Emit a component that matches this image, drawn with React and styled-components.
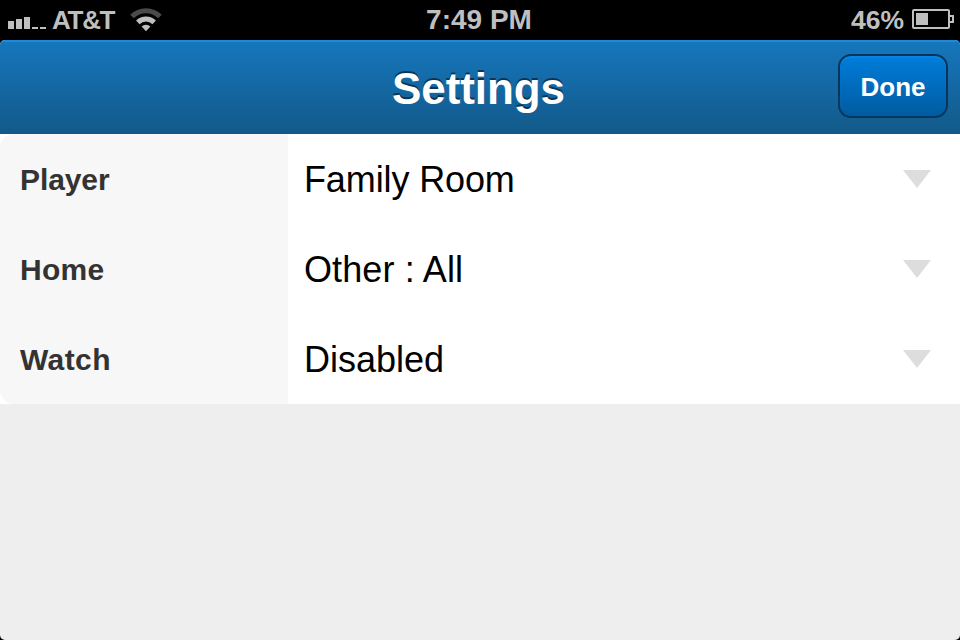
import React from "react";
import styled, { createGlobalStyle } from "styled-components";

const Global = createGlobalStyle`
  * { box-sizing: border-box; }
  body {
    margin: 0;
    background: #000;
    overflow: hidden;
    font-family: "Liberation Sans", Arial, Helvetica, sans-serif;
  }
`;

const Screen = styled.div`
  display: flex;
  flex-direction: column;
  width: 960px;
  height: 640px;
  background: #000;
`;

const StatusBar = styled.div`
  display: grid;
  grid-template-columns: 1fr auto 1fr;
  height: 40px;
  padding: 0 6px 0 8px;
  color: #bfbfbf;
  font-weight: 700;
  line-height: 40px;
  white-space: nowrap;
`;

const StatusGroup = styled.div`
  display: flex;
  height: 40px;
  justify-content: ${(p) => (p.$end ? "flex-end" : "flex-start")};
`;

const Carrier = styled.span`
  width: 64px;
  margin: 0 14px 0 6px;
  font-size: 26px;
  letter-spacing: -1.3px;
`;

const Clock = styled.span`
  margin-right: 4px;
  font-size: 28px;
`;

const Charge = styled.span`
  margin-right: 8px;
  font-size: 26.5px;
`;

const Glyph = styled.svg`
  display: block;
  flex: none;
  height: 40px;
`;

const Page = styled.main`
  flex: 1;
  background: #eee;
  border-radius: 5px;
  overflow: hidden;
`;

const NavBar = styled.header`
  display: grid;
  grid-template-columns: 1fr auto 1fr;
  align-items: start;
  height: 94px;
  padding: 14px 12px 0 9px;
  background: linear-gradient(#1677bd, #125989);
  box-shadow: inset 0 2px #1f8ad8;
`;

const Title = styled.h1`
  grid-column: 2;
  margin: 0;
  padding-top: 10px;
  font-size: 44px;
  line-height: 50px;
  letter-spacing: -0.1px;
  color: #fff;
  text-shadow: 0 -2px 0 rgba(0, 0, 0, 0.5);
`;

const DoneButton = styled.button`
  justify-self: end;
  width: 110px;
  height: 64px;
  padding: 2px 0 0;
  border: 2px solid #07365c;
  border-radius: 13px;
  background: linear-gradient(#007ddb, #005ba0);
  background-clip: padding-box;
  box-shadow: inset 0 2px 1px #0585e4;
  color: #fff;
  font: 700 26px "Liberation Sans", Arial, sans-serif;
`;

const List = styled.div`
  background: #fff;
`;

const Row = styled.div`
  display: flex;
  align-items: center;
  height: 90px;
  padding-right: 29px;
`;

const Name = styled.div`
  width: 288px;
  height: 90px;
  padding-left: 20px;
  background: #f7f7f7;
  color: #333;
  font-size: 30px;
  font-weight: 700;
  line-height: 92px;
  letter-spacing: ${(p) => p.$spacing}px;

  ${Row}:first-child & { border-top-left-radius: 14px; }
  ${Row}:last-child & { border-bottom-left-radius: 14px; }
`;

const Value = styled.div`
  flex: 1;
  padding: 2px 0 0 16px;
  font-size: 36px;
  line-height: 90px;
  letter-spacing: ${(p) => p.$spacing}px;
  color: #000;
`;

const Arrow = styled.span`
  border: 14px solid transparent;
  border-top: 18px solid #ddd;
  border-bottom: 0;
`;

const rows = [
  { name: "Player", value: "Family Room", nameSpacing: -0.1, valueSpacing: -0.12 },
  { name: "Home", value: "Other : All", nameSpacing: 0.25, valueSpacing: 0.1 },
  { name: "Watch", value: "Disabled", nameSpacing: 0.4, valueSpacing: 0 },
];

const Signal = () => (
  <Glyph width="38" viewBox="0 0 38 40" fill="#bfbfbf">
    <path d="M0 21h6v8H0zM8 19h6v10H8zM16 17h6v12h-6zM24 27h6v2h-6zM32 27h6v2h-6z" />
  </Glyph>
);

const Wifi = () => (
  <Glyph width="32" viewBox="0 0 32 40">
    <path d="M2 16.6a19.6 19.6 0 0 1 28 0" fill="none" stroke="#4a4a4a" strokeWidth="5" />
    <path d="M7.8 22.4a11.8 11.8 0 0 1 16.4 0" fill="none" stroke="#bfbfbf" strokeWidth="5" />
    <path d="M16 31.2l-4.4-4.6a6.2 6.2 0 0 1 8.8 0z" fill="#bfbfbf" />
  </Glyph>
);

const Battery = () => (
  <Glyph width="42" viewBox="0 0 42 40" fill="none" stroke="#bfbfbf" strokeWidth="2">
    <rect x="1" y="10" width="36" height="18" rx="1" />
    <path d="M38 16h3v6h-3" />
    <path d="M4 13h12v12H4z" fill="#bfbfbf" stroke="none" />
  </Glyph>
);

export default function App() {
  return (
    <Screen>
      <Global />
      <StatusBar>
        <StatusGroup>
          <Signal />
          <Carrier>AT&amp;T</Carrier>
          <Wifi />
        </StatusGroup>
        <Clock>7:49 PM</Clock>
        <StatusGroup $end>
          <Charge>46%</Charge>
          <Battery />
        </StatusGroup>
      </StatusBar>
      <Page>
        <NavBar>
          <Title>Settings</Title>
          <DoneButton>Done</DoneButton>
        </NavBar>
        <List>
          {rows.map((row) => (
            <Row key={row.name}>
              <Name $spacing={row.nameSpacing}>{row.name}</Name>
              <Value $spacing={row.valueSpacing}>{row.value}</Value>
              <Arrow />
            </Row>
          ))}
        </List>
      </Page>
    </Screen>
  );
}
